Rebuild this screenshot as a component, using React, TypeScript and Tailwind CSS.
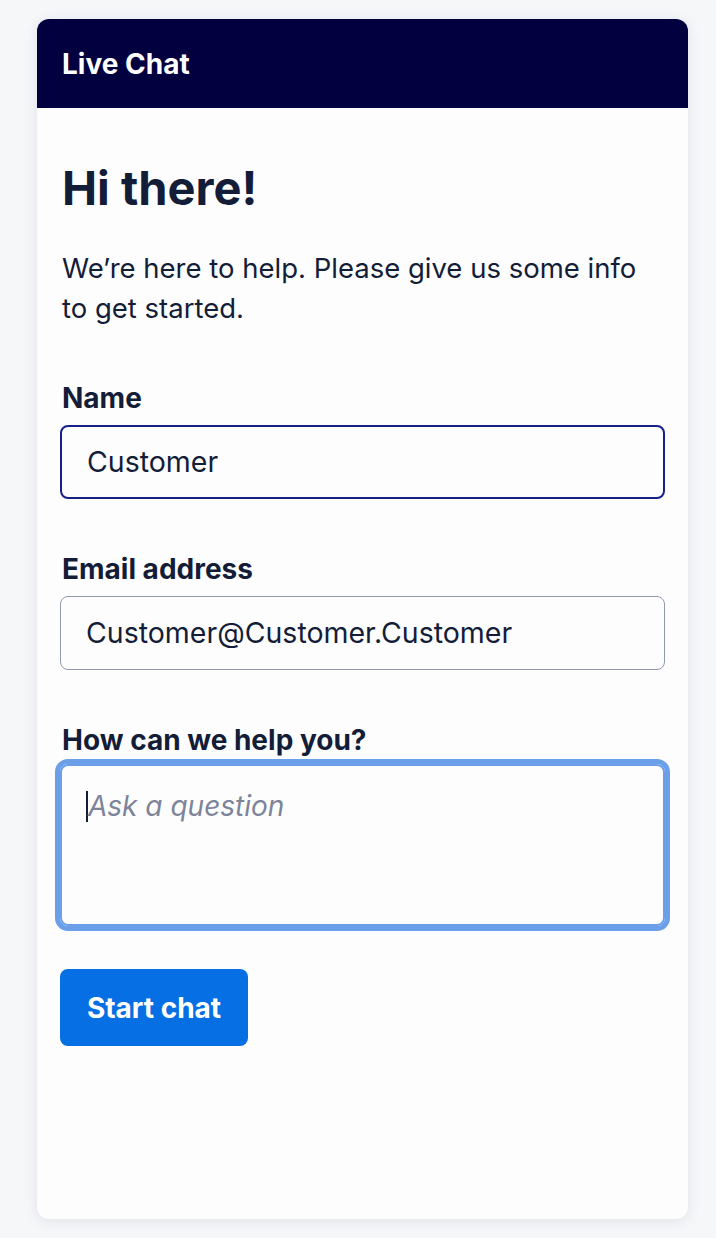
export default function App() {
  return (
    <div className="min-h-[1238px] bg-[#f6f7f9] pt-[19px] pl-[37px]" style={{ fontFamily: 'Inter, "Noto Sans", sans-serif' }}>
      <div className="w-[651px] h-[1200px] rounded-[12px] bg-[#fdfdfe] overflow-hidden shadow-[0_2px_14px_rgba(30,40,80,0.10)] flex flex-col">
        <div className="h-[89px] bg-[#03003f] flex items-center px-[25px]">
          <span className="text-white text-[28px] font-bold">Live Chat</span>
        </div>
        <div className="px-[23px] pt-[52px] text-[#141d38]">
          <h1 className="ml-[2px] text-[47px] leading-[56px] font-bold">Hi there!</h1>
          <p className="ml-[2px] mt-[32px] text-[27.5px] leading-[40px]">We’re here to help. Please give us some info to get started.</p>

          <label className="block ml-[2px] mt-[52px] text-[28px] leading-[36px] font-bold">Name</label>
          <div className="mt-[9px] h-[74px] rounded-[8px] border-2 border-[#15208a] flex items-center px-[25px] text-[28.5px]">Customer</div>

          <label className="block ml-[2px] mt-[52px] text-[28px] leading-[36px] font-bold">Email address</label>
          <div className="mt-[9px] h-[74px] rounded-[8px] border-[1.5px] border-[#9399ad] flex items-center px-[25px] text-[28.5px]">Customer@Customer.Customer</div>

          <label className="block ml-[2px] mt-[52px] text-[28px] leading-[36px] font-bold">How can we help you?</label>
          <div className="mt-[6px] h-[162px] rounded-[8px] border-2 border-[#6c9fe9] outline-[5px] outline-[#6c9fe9] px-[24px] pt-[24px]">
            <div className="flex items-center h-[32px]">
              <span className="w-[2px] h-[31px] bg-[#141d38]"></span>
              <span className="text-[28px] italic text-[#7d8499]">Ask a question</span>
            </div>
          </div>

          <button className="mt-[43px] h-[77px] w-[188px] rounded-[8px] bg-[#066fe3] text-white text-[28px] font-bold">Start chat</button>
        </div>
      </div>
    </div>
  );
}
